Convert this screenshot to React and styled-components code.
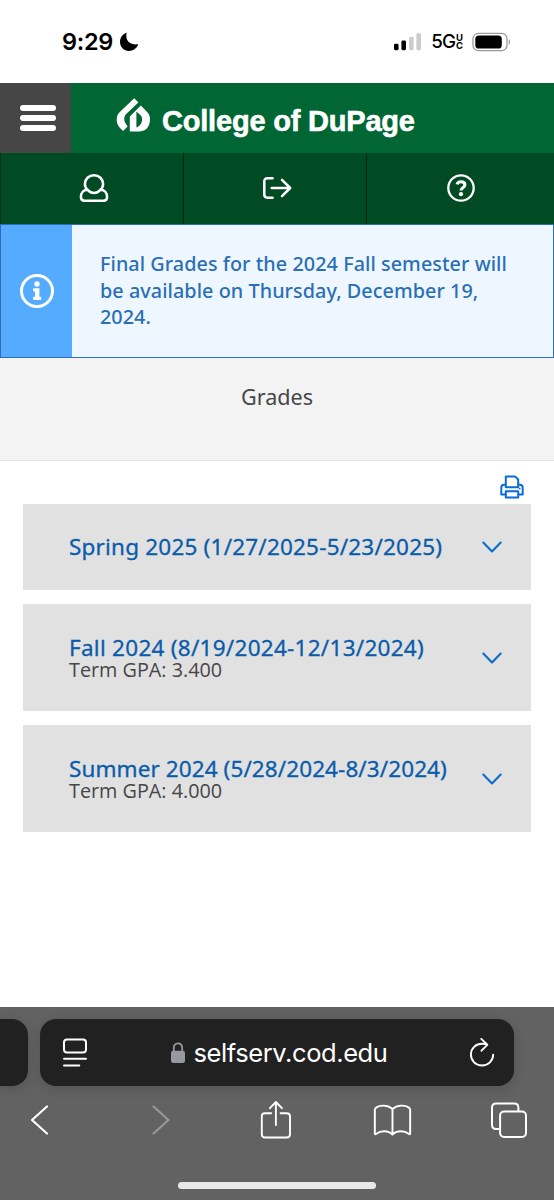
import React from "react";
import styled, { createGlobalStyle, css } from "styled-components";

const terms = [
  { id: "25SP", title: "Spring 2025 (1/27/2025-5/23/2025)", spacing: "0.2px" },
  {
    id: "24FA",
    title: "Fall 2024 (8/19/2024-12/13/2024)",
    gpa: "3.400",
    spacing: "0.27px",
  },
  {
    id: "24SU",
    title: "Summer 2024 (5/28/2024-8/3/2024)",
    gpa: "4.000",
    spacing: "0.09px",
  },
];

const MoonIcon = () => (
  <svg width="20" height="20" viewBox="0 0 20 20">
    <path
      d="M7.6 1.1C6.2 6.9 9.6 13.6 18.2 12.3C19 12.2 19.3 12.6 18.8 13.4C17 16.7 13.9 18.9 10.1 18.9C5 18.9 1 14.9 1 9.9C1 5.9 3.3 2.6 6.7 1C7.3 .7 7.8 .6 7.6 1.1Z"
      fill="#000"
    />
  </svg>
);

const SignalIcon = () => (
  <svg width="29" height="20" viewBox="0 0 29 20">
    <rect x="1" y="11.7" width="4.6" height="6.5" rx="1.4" fill="#000" />
    <rect x="8.4" y="8.6" width="4.6" height="9.6" rx="1.4" fill="#000" />
    <rect x="16" y="5" width="4.6" height="13.2" rx="1.4" fill="#ccc" />
    <rect x="23.4" y="1.2" width="4.6" height="17" rx="1.4" fill="#ccc" />
  </svg>
);

const BatteryIcon = () => (
  <svg width="39" height="20" viewBox="0 0 39 20">
    <rect
      x="1"
      y="1.3"
      width="34"
      height="17.4"
      rx="5.5"
      fill="none"
      stroke="#9b9b9b"
      strokeWidth="1.3"
    />
    <rect x="3.3" y="3.5" width="26.5" height="13" rx="3.6" fill="#000" />
    <path d="M36.7 7.2C38.5 8 38.5 12 36.7 12.8Z" fill="#9b9b9b" />
  </svg>
);

const CollegeLogo = () => (
  <svg width="36" height="36" viewBox="0 0 36 36">
    <path
      d="M18.2 1.3L22.3 5.3L21.6 6.2L9.9 17.2C8 19.4 7.8 22.6 9 25.4L11.6 29.6L7.2 34C4.2 31.8 .7 28 .7 23C.6 19.6 1.5 17.4 3.8 15Z"
      fill="#fff"
    />
    <path
      d="M24.8 8.6L31.6 15.6C33.3 17.4 34.1 19.8 34 22.6C33.9 29.6 30.2 34.4 23.6 34.4H13.8V19.4Z"
      fill="#fff"
    />
    <path
      d="M20.4 14.4L24.6 18.2C26.4 20 26.6 22.8 25.5 25.5C24.6 27.8 23.2 29.4 20.4 30.4Z"
      fill="#006633"
    />
  </svg>
);

const UserIcon = () => (
  <svg width="32" height="32" viewBox="0 0 32 32">
    <g fill="none" stroke="#fff" strokeWidth="2.5" strokeLinejoin="round">
      <path d="M9.6 17.8C7.7 16.2 6.9 14 6.9 12C6.9 7 10.9 3.2 16 3.2C21.1 3.2 25.1 7 25.1 12C25.1 14 24.3 16.2 22.4 17.8C20.6 19.8 18.4 20.9 16 20.9C13.6 20.9 11.4 19.8 9.6 17.8Z" />
      <path d="M9.6 17.8C5.5 17.8 2.9 20.9 2.9 25.1C2.9 27.4 4.1 28.8 6.4 28.8H25.6C27.9 28.8 29.1 27.4 29.1 25.1C29.1 20.9 26.5 17.8 22.4 17.8" />
    </g>
  </svg>
);

const LogoutIcon = () => (
  <svg width="32" height="32" viewBox="0 0 32 32">
    <path
      d="M11.6 6.3H6.4C4.4 6.3 3.3 7.4 3.3 9.4V22.6C3.3 24.6 4.4 25.7 6.4 25.7H11.6M10.7 16H29M21 7.8L29.2 16L21 24.2"
      fill="none"
      stroke="#fff"
      strokeWidth="2.5"
      strokeLinecap="round"
      strokeLinejoin="round"
    />
  </svg>
);

const HelpIcon = () => (
  <svg width="32" height="32" viewBox="0 0 32 32">
    <circle cx="16" cy="16" r="12.7" fill="none" stroke="#fff" strokeWidth="2.3" />
    <path
      d="M12.1 12.4C12.5 10.6 14 9.8 16 9.8C18.3 9.8 19.9 11 19.9 12.9C19.9 15.7 16 15.2 16 18.6"
      fill="none"
      stroke="#fff"
      strokeWidth="3.1"
    />
    <circle cx="16" cy="22.2" r="2.1" fill="#fff" />
  </svg>
);

const InfoIcon = () => (
  <svg width="36" height="36" viewBox="0 0 36 36">
    <circle cx="18" cy="18" r="15.5" fill="none" stroke="#fff" strokeWidth="3" />
    <circle cx="18" cy="11" r="2.7" fill="#fff" />
    <path
      d="M14.2 15.3H20.4V23.7H22.2V27H14.2V23.7H16V18.6H14.2Z"
      fill="#fff"
    />
  </svg>
);

const PrintIcon = () => (
  <svg width="26" height="26" viewBox="0 0 26 26">
    <g fill="none" stroke="#0a6cd6" strokeWidth="2" strokeLinejoin="round">
      <path d="M6.8 13.2V2.6H16.3L19.2 5.5V13.2Z" />
      <path d="M6.5 10.8H5.2C3.3 10.8 2.3 11.9 2.3 13.7V20.6H6.5M19.5 10.8H20.8C22.7 10.8 23.7 11.9 23.7 13.7V20.6H19.5" />
      <path d="M6.8 17.3H19.2V23.5H6.8Z" />
    </g>
    <circle cx="20.7" cy="14.6" r="0.9" fill="#0a6cd6" />
  </svg>
);

const ChevronIcon = () => (
  <svg width="20" height="12" viewBox="0 0 20 12">
    <path
      d="M1.3 1.6L10 10.4L18.7 1.6"
      fill="none"
      stroke="#0a6cc9"
      strokeWidth="2.1"
      strokeLinecap="round"
      strokeLinejoin="round"
    />
  </svg>
);

const ReaderIcon = () => (
  <svg width="26" height="30" viewBox="0 0 26 30">
    <g fill="none" stroke="#fff" strokeWidth="2" strokeLinecap="round">
      <rect x="2" y="1.4" width="22" height="13.2" rx="3" />
      <path d="M2 20.8H24M2 27.6H17.3" />
    </g>
  </svg>
);

const LockIcon = () => (
  <svg width="16" height="22" viewBox="0 0 16 22">
    <path
      d="M3.8 10V6.2C3.8 3.2 5.4 1.4 8 1.4C10.6 1.4 12.2 3.2 12.2 6.2V10"
      fill="none"
      stroke="#98989f"
      strokeWidth="1.8"
    />
    <rect x="1" y="8.8" width="14" height="12.2" rx="2.2" fill="#98989f" />
  </svg>
);

const ReloadIcon = () => (
  <svg width="26" height="30" viewBox="0 0 26 30">
    <path
      d="M24.2 16.6C24.2 22.7 19.2 27.5 13 27.5C6.8 27.5 1.9 22.7 1.9 16.5C1.9 10.4 6.8 5.8 13 5.8C14.8 5.8 16.5 6.1 18 6.6M12.3 .9L18.3 6.8L12.5 12.7"
      fill="none"
      stroke="#fff"
      strokeWidth="1.9"
      strokeLinecap="round"
      strokeLinejoin="round"
    />
  </svg>
);

const ArrowIcon = ({ forward }) => (
  <svg width="18" height="30" viewBox="0 0 18 30">
    <path
      d={forward ? "M1.5 1.5L16.5 15L1.5 28.5" : "M16 1.5L1 15L16 28.5"}
      fill="none"
      stroke={forward ? "#979797" : "#fff"}
      strokeWidth="2.2"
      strokeLinecap="round"
      strokeLinejoin="round"
    />
  </svg>
);

const ShareIcon = () => (
  <svg width="32" height="40" viewBox="0 0 32 40">
    <path
      d="M11.2 13.2H5C2.8 13.2 1.8 14.3 1.8 16.5V34.3C1.8 36.5 2.8 37.5 5 37.5H26.8C29 37.5 30 36.5 30 34.3V16.5C30 14.3 29 13.2 26.8 13.2H20.6M15.9 25V2.2M9.9 8.2L15.9 2L21.9 8.2"
      fill="none"
      stroke="#fff"
      strokeWidth="1.9"
      strokeLinecap="round"
      strokeLinejoin="round"
    />
  </svg>
);

const BookIcon = () => (
  <svg width="39" height="33" viewBox="0 0 40 34">
    <path
      d="M20 5.2C15.5 .8 6.5 .6 2.6 4.2C2 4.8 1.8 5.2 1.8 6V30.3C1.8 31.5 2.4 31.3 3.4 30.6C7.5 27.4 15.6 26.8 20 31.5C24.4 26.8 32.5 27.4 36.6 30.6C37.6 31.3 38.2 31.5 38.2 30.3V6C38.2 5.2 38 4.8 37.4 4.2C33.5 .6 24.5 .8 20 5.2ZM20 5.2V31.5"
      fill="none"
      stroke="#fff"
      strokeWidth="2"
      strokeLinejoin="round"
    />
  </svg>
);

const TabsIcon = () => (
  <svg width="38" height="38" viewBox="0 0 38 38">
    <g fill="none" stroke="#fff" strokeWidth="2">
      <path d="M10 28H6.2C3.4 28 2 26.6 2 23.8V6.7C2 3.9 3.4 2.5 6.2 2.5H24.2C27 2.5 28.4 3.9 28.4 6.7V10.3" />
      <rect x="10.1" y="10.5" width="25.9" height="25.5" rx="4" />
    </g>
  </svg>
);

const App = () => (
  <Screen>
    <GlobalStyle />
    <StatusBar>
      <Clock>
        9:29
        <MoonIcon />
      </Clock>
      <StatusIcons>
        <SignalIcon />
        <Network>
          5G
          <NetworkBand>
            <span>U</span>
            <span>C</span>
          </NetworkBand>
        </Network>
        <BatteryIcon />
      </StatusIcons>
    </StatusBar>

    <SiteHeader>
      <MenuButton>
        <MenuLine />
        <MenuLine />
        <MenuLine />
      </MenuButton>
      <Brand>
        <CollegeLogo />
        <BrandName>College of DuPage</BrandName>
      </Brand>
    </SiteHeader>

    <UserNav>
      <NavItem>
        <UserIcon />
      </NavItem>
      <NavItem>
        <LogoutIcon />
      </NavItem>
      <NavItem>
        <HelpIcon />
      </NavItem>
    </UserNav>

    <Notice>
      <NoticeIcon>
        <InfoIcon />
      </NoticeIcon>
      <NoticeText>
        Final Grades for the 2024 Fall semester will be available on Thursday,
        December 19, 2024.
      </NoticeText>
    </Notice>

    <PageHeader>
      <PageTitle>Grades</PageTitle>
    </PageHeader>

    <Content>
      <Toolbar>
        <PrintIcon />
      </Toolbar>
      <TermList>
        {terms.map((term) => (
          <TermCard key={term.id} $tall={Boolean(term.gpa)}>
            <div>
              <TermTitle $spacing={term.spacing}>{term.title}</TermTitle>
              {term.gpa && <TermGpa>Term GPA: {term.gpa}</TermGpa>}
            </div>
            <ChevronIcon />
          </TermCard>
        ))}
      </TermList>
    </Content>

    <BrowserBar>
      <TabStrip>
        <PreviousTab />
        <AddressBar>
          <ReaderIcon />
          <Address>
            <LockIcon />
            <Host>selfserv.cod.edu</Host>
          </Address>
          <ReloadIcon />
        </AddressBar>
      </TabStrip>
      <BrowserActions>
        <ArrowIcon />
        <ArrowIcon forward />
        <ShareIcon />
        <BookIcon />
        <TabsIcon />
      </BrowserActions>
      <HomeIndicator />
    </BrowserBar>
  </Screen>
);

export default App;

const GlobalStyle = createGlobalStyle`
  * {
    box-sizing: border-box;
  }

  body {
    margin: 0;
    background: #fff;
  }

  svg {
    display: block;
    flex-shrink: 0;
  }
`;

const flexStyle = css`
  display: flex;
  align-items: center;
`;

const Screen = styled.div`
  display: flex;
  flex-direction: column;
  width: 554px;
  height: 1200px;
  overflow: hidden;
  font-family: "Open Sans", sans-serif;
`;

const StatusBar = styled.div`
  ${flexStyle};
  justify-content: space-between;
  height: 83px;
  padding: 0 43px 0 62px;
  font-family: Inter, sans-serif;
  color: #000;
`;

const Clock = styled.div`
  ${flexStyle};
  gap: 6px;
  font-size: 23.5px;
  font-weight: 600;
  letter-spacing: -0.3px;
`;

const StatusIcons = styled.div`
  ${flexStyle};
  gap: 9px;
`;

const Network = styled.div`
  ${flexStyle};
  gap: 1px;
  font-size: 18.8px;
  font-weight: 500;
  letter-spacing: -1px;
`;

const NetworkBand = styled.div`
  display: flex;
  flex-direction: column;
  font-size: 9.5px;
  font-weight: 700;
  line-height: 8px;
  letter-spacing: 0;
`;

const SiteHeader = styled.header`
  display: flex;
  height: 70px;
  background: #006633;
`;

const MenuButton = styled.div`
  display: flex;
  flex-direction: column;
  align-items: center;
  justify-content: center;
  gap: 4px;
  width: 71px;
  background: #464646;
`;

const MenuLine = styled.span`
  width: 36px;
  height: 6px;
  margin-left: 5px;
  border-radius: 3px;
  background: #fff;
`;

const Brand = styled.div`
  ${flexStyle};
  padding-left: 45px;

  & > svg {
    margin-bottom: 6px;
  }
`;

const BrandName = styled.span`
  margin: 6px 0 0 10px;
  font-family: "Liberation Sans", Arial, sans-serif;
  font-size: 29px;
  font-weight: 700;
  letter-spacing: -0.2px;
  color: #fff;
  -webkit-text-stroke: 0.6px #fff;
`;

const UserNav = styled.nav`
  display: grid;
  grid-template-columns: 183px 183px 1fr;
  height: 71px;
  background: #004b23;
  border-left: 1px solid #00331a;
`;

const NavItem = styled.div`
  ${flexStyle};
  justify-content: center;
  padding: 0 0 1px 4px;
  border-right: 1px solid #002611;

  &:last-child {
    padding-left: 0;
    border-right: 0;
  }
`;

const Notice = styled.section`
  display: flex;
  height: 134px;
  border: 1px solid #2a6fb5;
  background: #eef7ff;
`;

const NoticeIcon = styled.div`
  ${flexStyle};
  justify-content: center;
  width: 71px;
  background: #54abff;
`;

const NoticeText = styled.p`
  width: 455px;
  margin: 0;
  padding: 26px 0 0 28px;
  font-family: "Noto Sans", sans-serif;
  font-size: 19.8px;
  font-weight: 500;
  line-height: 26.7px;
  letter-spacing: 0.06px;
  color: #2a6fb5;
`;

const PageHeader = styled.section`
  display: flex;
  justify-content: center;
  height: 103px;
  padding-top: 24px;
  background: #f3f3f3;
  border-bottom: 1px solid #e2e2e2;
`;

const PageTitle = styled.h1`
  margin: 0;
  font-family: "Noto Sans", sans-serif;
  font-size: 21.6px;
  font-weight: 400;
  line-height: 30px;
  color: #464646;
`;

const Content = styled.main`
  flex: 1;
  padding: 13px 23px 0;
`;

const Toolbar = styled.div`
  display: flex;
  justify-content: flex-end;
  height: 30px;
  padding-right: 6px;
`;

const TermList = styled.div`
  display: flex;
  flex-direction: column;
  gap: 14px;
`;

const TermCard = styled.article`
  ${flexStyle};
  justify-content: space-between;
  height: ${(props) => (props.$tall ? "107px" : "86px")};
  padding: 0 29px 0 46px;
  background: #e1e1e1;
`;

const TermTitle = styled.h2`
  margin: 0;
  font-family: "Noto Sans", sans-serif;
  font-size: 22.5px;
  font-weight: 400;
  line-height: 24px;
  letter-spacing: ${(props) => props.$spacing};
  white-space: nowrap;
  color: #0a5cab;
  -webkit-text-stroke: 0.3px #0a5cab;
`;

const TermGpa = styled.div`
  font-size: 19.8px;
  line-height: 20px;
  color: #464646;
`;

const BrowserBar = styled.footer`
  display: flex;
  flex-direction: column;
  height: 193px;
  padding-top: 12px;
  background: #626262;
`;

const TabStrip = styled.div`
  display: flex;
  gap: 12px;
`;

const PreviousTab = styled.div`
  width: 28px;
  height: 67px;
  border-radius: 0 16px 16px 0;
  background: #212121;
  box-shadow: 0 3px 12px rgba(0, 0, 0, 0.15);
`;

const AddressBar = styled.div`
  ${flexStyle};
  justify-content: space-between;
  width: 474px;
  height: 67px;
  padding: 0 19px 0 22px;
  border-radius: 16px;
  background: #212121;
  box-shadow: 0 3px 12px rgba(0, 0, 0, 0.15);
`;

const Address = styled.div`
  ${flexStyle};
  gap: 8px;
`;

const Host = styled.span`
  font-family: Inter, sans-serif;
  font-size: 25.5px;
  letter-spacing: -0.42px;
  color: #fff;
`;

const BrowserActions = styled.div`
  display: grid;
  grid-template-columns: 121px 108px 113px 117px auto;
  align-items: center;
  height: 68px;
  padding-left: 31px;
`;

const HomeIndicator = styled.div`
  width: 198px;
  height: 7px;
  margin: 28px auto 0;
  border-radius: 4px;
  background: #e8e8e8;
`;
